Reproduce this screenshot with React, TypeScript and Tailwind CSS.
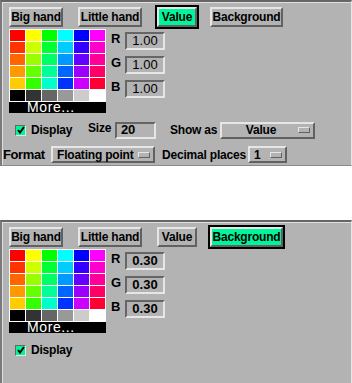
import React from "react";

const font = { fontFamily: '"Liberation Sans", Arial, sans-serif' };

const palette = [
  ["#ff0000", "#ffff00", "#00ff00", "#00ffff", "#0000ff", "#ff00ff"],
  ["#ff3300", "#ccff00", "#00ff33", "#00ccff", "#3300ff", "#ff00cc"],
  ["#ff6600", "#99ff00", "#00ff66", "#0099ff", "#6600ff", "#ff0099"],
  ["#ff9900", "#66ff00", "#00ff99", "#0066ff", "#9900ff", "#ff0066"],
  ["#ffcc00", "#33ff00", "#00ffcc", "#0033ff", "#cc00ff", "#ff0033"],
  ["#000000", "#333333", "#666666", "#999999", "#cccccc", "#ffffff"],
];

const raised =
  "border-2 border-t-[#e6e6e6] border-l-[#e6e6e6] border-r-[#616161] border-b-[#616161]";
const sunken =
  "border-2 border-t-[#666666] border-l-[#666666] border-r-[#e6e6e6] border-b-[#e6e6e6]";

function TabButton({ label, width, selected, className = "" }: { label: string; width: string; selected?: boolean; className?: string }) {
  return (
    <div className={`shrink-0 p-[2px] ${selected ? "bg-black" : ""} ${className}`}>
      <div
        className={`${raised} ${width} h-[20px] flex items-center justify-center whitespace-nowrap text-[12px] font-bold tracking-[-0.2px] text-black ${
          selected ? "bg-[#00f59a]" : "bg-[#b3b3b3]"
        }`}
      >
        {label}
      </div>
    </div>
  );
}

function Tabs({ selected }: { selected: string }) {
  return (
    <div className="flex pl-[5px]">
      <TabButton label="Big hand" width="w-[54px]" selected={selected === "Big hand"} />
      <TabButton label="Little hand" width="w-[64px]" selected={selected === "Little hand"} className="ml-[11px]" />
      <TabButton label="Value" width="w-[40px]" selected={selected === "Value"} className="ml-[11px]" />
      <TabButton label="Background" width="w-[73px]" selected={selected === "Background"} className="ml-[9px]" />
    </div>
  );
}

function Palette() {
  return (
    <div className="w-[97px] shrink-0">
      <div className="grid grid-cols-6 gap-px p-px bg-white">
        {palette.flat().map((c, i) => (
          <div key={i} className="h-[11px]" style={{ backgroundColor: c }} />
        ))}
      </div>
      <div className="h-[11px] bg-black text-white text-[14px] leading-[10px] pl-[18px] tracking-[0.6px] whitespace-nowrap">
        More...
      </div>
    </div>
  );
}

function RgbFields({ value, bold }: { value: string; bold?: boolean }) {
  return (
    <div className="ml-[5px] mt-[3px] flex flex-col gap-[6px]">
      {["R", "G", "B"].map((l) => (
        <div key={l} className="flex items-start">
          <span className="w-[14px] text-[13px] font-bold leading-[12px] pt-px">{l}</span>
          <div
            className={`${sunken} w-[40px] h-[18px] flex items-center justify-center text-[13px] ${
              bold ? "font-bold" : ""
            }`}
          >
            {value}
          </div>
        </div>
      ))}
    </div>
  );
}

function Checkbox() {
  return (
    <div className={`${sunken} shrink-0 w-[11px] h-[11px] bg-[#00f59a] border-[1.5px] flex items-center justify-center`}>
      <svg width="8" height="8" viewBox="0 0 8 8">
        <path d="M1 4 L3 6.5 L7 1" stroke="black" strokeWidth="2" fill="none" />
      </svg>
    </div>
  );
}

function Indicator() {
  return <div className={`${raised} border-[1.5px] w-[12px] h-[6px] bg-[#b3b3b3]`} />;
}

function Dropdown({ label, width, center }: { label: string; width: string; center?: boolean }) {
  return (
    <div className={`${raised} ${width} shrink-0 h-[17px] flex items-center whitespace-nowrap text-[12px] font-bold tracking-[-0.2px]`}>
      {center ? (
        <span className="flex-1 text-center pl-[2px]">{label}</span>
      ) : (
        <span className="flex-1 pl-[4px]">{label}</span>
      )}
      <div className="mr-[3px]">
        <Indicator />
      </div>
    </div>
  );
}

function Label({ className = "", children }: { className?: string; children: React.ReactNode }) {
  return <span className={`shrink-0 whitespace-nowrap ${className}`}>{children}</span>;
}

function Panel({ className = "", children }: { className?: string; children: React.ReactNode }) {
  return (
    <div
      className={`bg-[#b3b3b3] border-t-2 border-l-2 border-t-[#666666] border-l-[#7a7a7a] border-r border-r-[#e6e6e6] pt-[3px] shadow-[inset_1px_1px_0_#e0e0e0] ${className}`}
    >
      {children}
    </div>
  );
}

function Editor({ selected, value, bold, full }: { selected: string; value: string; bold?: boolean; full?: boolean }) {
  return (
    <>
      <Tabs selected={selected} />
      <div className="flex pl-[7px]">
        <Palette />
        <RgbFields value={value} bold={bold} />
      </div>
      <div className="flex items-center mt-[8px] pl-[13px] h-[18px] text-[12px] font-bold tracking-[-0.2px]">
        <Checkbox />
        <Label className="ml-[5px] w-[57px]">Display</Label>
        {full && (
          <>
            <Label className="w-[27px] -mt-[4px]">Size</Label>
            <div className={`${sunken} shrink-0 w-[41px] h-[17px] flex items-center pl-[4px] text-[13px] font-bold`}>20</div>
            <Label className="ml-[14px] w-[50px]">Show as</Label>
            <Dropdown label="Value" width="w-[95px]" center />
          </>
        )}
      </div>
    </>
  );
}

export default function App() {
  return (
    <div className="w-[352px] h-[383px] bg-white text-black" style={font}>
      <Panel className="h-[166px] border-b border-b-[#8a8a8a]">
        <Editor selected="Value" value="1.00" full />
        <div className="flex items-center mt-[7px] h-[17px] text-[12px] font-bold tracking-[-0.2px]">
          <Label className="w-[49px] pl-px text-[13px] tracking-[-0.4px]">Format</Label>
          <Dropdown label="Floating point" width="w-[104px]" />
          <Label className="ml-[7px] w-[86px]">Decimal places</Label>
          <Dropdown label="1" width="w-[39px]" />
        </div>
      </Panel>
      <div className="h-[54px]" />
      <Panel className="h-[163px]">
        <Editor selected="Background" value="0.30" bold />
      </Panel>
    </div>
  );
}
